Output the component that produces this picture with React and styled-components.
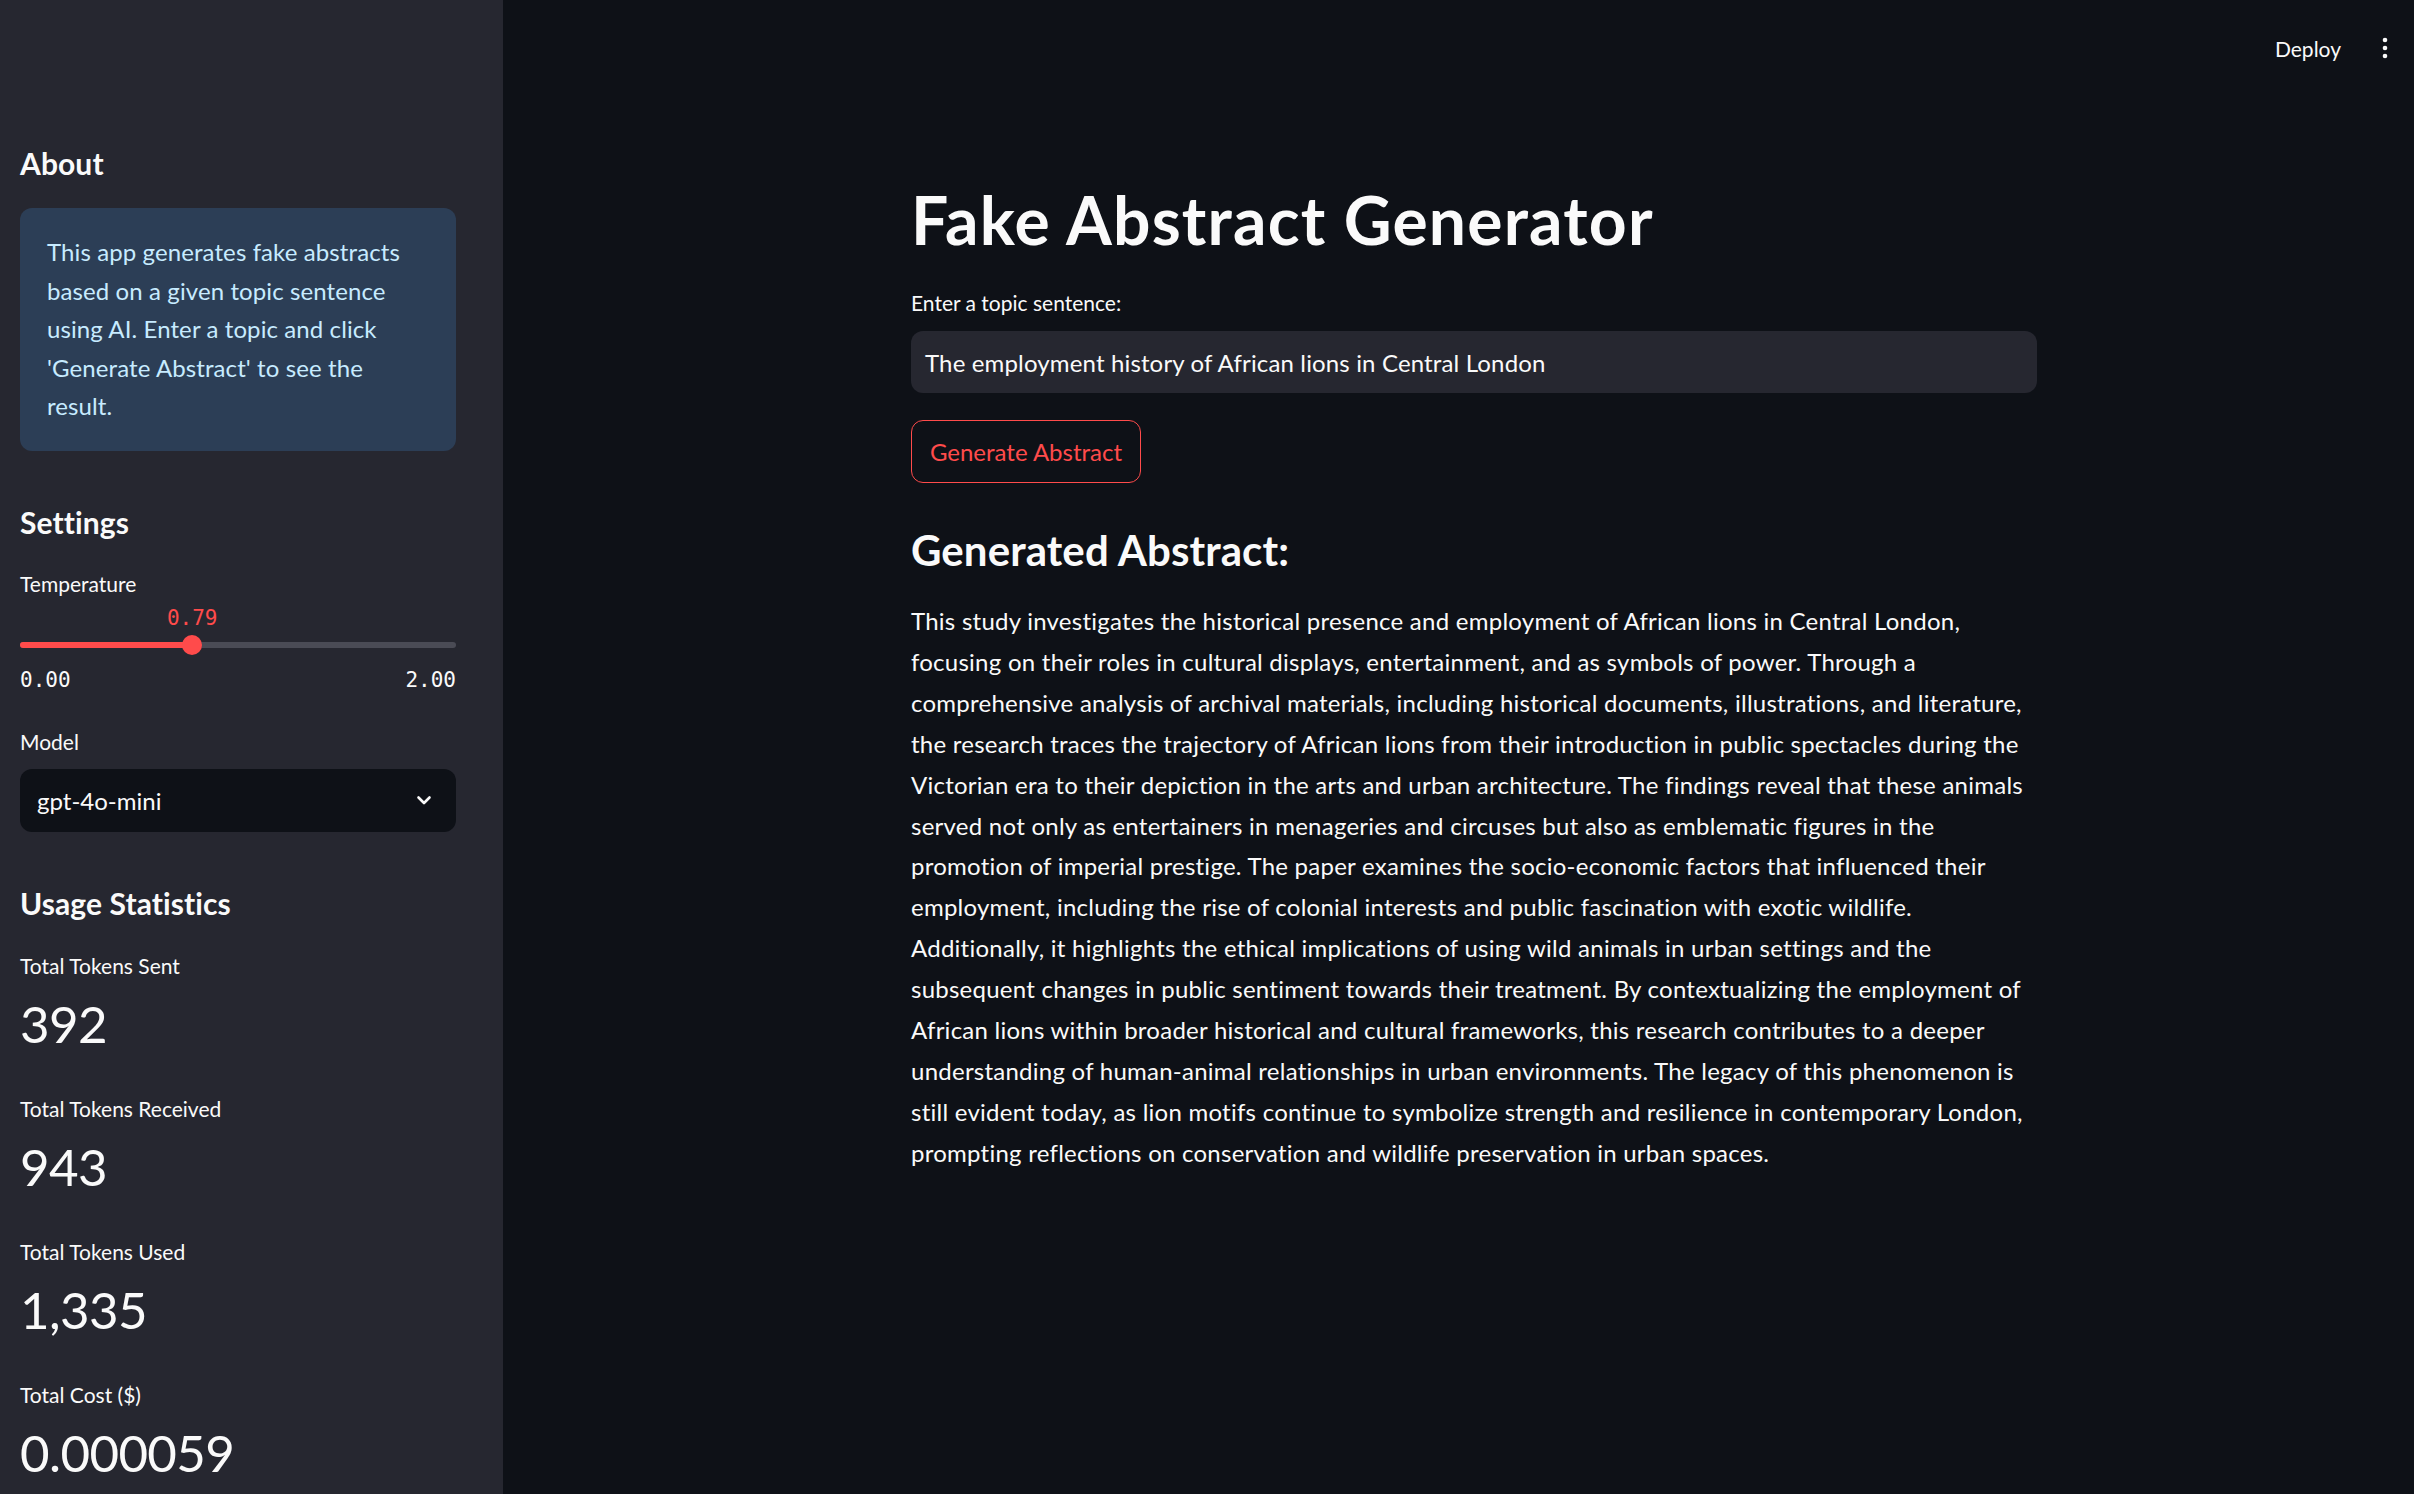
import React from "react";
import styled, { createGlobalStyle } from "styled-components";

const GlobalStyle = createGlobalStyle`
  body {
    margin: 0;
    background: #0e1117;
    color: #fafafa;
    font-family: Lato, "Noto Sans", sans-serif;
  }
`;

const infoLines = [
  "This app generates fake abstracts",
  "based on a given topic sentence",
  "using AI. Enter a topic and click",
  "'Generate Abstract' to see the",
  "result.",
];

const abstractLines = [
  "This study investigates the historical presence and employment of African lions in Central London,",
  "focusing on their roles in cultural displays, entertainment, and as symbols of power. Through a",
  "comprehensive analysis of archival materials, including historical documents, illustrations, and literature,",
  "the research traces the trajectory of African lions from their introduction in public spectacles during the",
  "Victorian era to their depiction in the arts and urban architecture. The findings reveal that these animals",
  "served not only as entertainers in menageries and circuses but also as emblematic figures in the",
  "promotion of imperial prestige. The paper examines the socio-economic factors that influenced their",
  "employment, including the rise of colonial interests and public fascination with exotic wildlife.",
  "Additionally, it highlights the ethical implications of using wild animals in urban settings and the",
  "subsequent changes in public sentiment towards their treatment. By contextualizing the employment of",
  "African lions within broader historical and cultural frameworks, this research contributes to a deeper",
  "understanding of human-animal relationships in urban environments. The legacy of this phenomenon is",
  "still evident today, as lion motifs continue to symbolize strength and resilience in contemporary London,",
  "prompting reflections on conservation and wildlife preservation in urban spaces.",
];

const metrics = [
  { label: "Total Tokens Sent", value: "392" },
  { label: "Total Tokens Received", value: "943" },
  { label: "Total Tokens Used", value: "1,335" },
  { label: "Total Cost ($)", value: "0.000059" },
];

const temperature = 0.79;
const tempMax = 2;

const App = () => {
  const pct = (temperature / tempMax) * 100;
  return (
    <>
      <GlobalStyle />
      <Page>
        <Sidebar>
          <SideHeading>About</SideHeading>
          <InfoBox>
            {infoLines.map((l) => (
              <Line key={l}>{l}</Line>
            ))}
          </InfoBox>

          <SideHeading $mt={53}>Settings</SideHeading>
          <FieldLabel $mt={27}>Temperature</FieldLabel>
          <Slider>
            <SliderValue style={{ left: `${pct}%` }}>{temperature.toFixed(2)}</SliderValue>
            <Track>
              <TrackFill style={{ width: `${pct}%` }} />
              <Thumb style={{ left: `${pct}%` }} />
            </Track>
            <Ticks>
              <span>0.00</span>
              <span>2.00</span>
            </Ticks>
          </Slider>

          <FieldLabel $mt={29}>Model</FieldLabel>
          <Select>
            <span>gpt-4o-mini</span>
            <svg width="24" height="24" viewBox="0 0 24 24" fill="none">
              <path d="M6.5 9.5l5.5 5.5 5.5-5.5" stroke="#fafafa" strokeWidth="2.6" strokeLinecap="round" strokeLinejoin="round" />
            </svg>
          </Select>

          <SideHeading $mt={53}>Usage Statistics</SideHeading>
          <Metrics>
            {metrics.map((m) => (
              <Metric key={m.label}>
                <MetricLabel>{m.label}</MetricLabel>
                <MetricValue>{m.value}</MetricValue>
              </Metric>
            ))}
          </Metrics>
        </Sidebar>

        <Main>
          <TopBar>
            <DeployButton>Deploy</DeployButton>
            <Kebab>
              <svg width="8" height="24" viewBox="0 0 8 24">
                <circle cx="4" cy="4" r="2.3" fill="#fafafa" />
                <circle cx="4" cy="12" r="2.3" fill="#fafafa" />
                <circle cx="4" cy="20" r="2.3" fill="#fafafa" />
              </svg>
            </Kebab>
          </TopBar>
          <Content>
            <Title>Fake Abstract Generator</Title>
            <InputLabel>Enter a topic sentence:</InputLabel>
            <TextInput>The employment history of African lions in Central London</TextInput>
            <Button>Generate Abstract</Button>
            <SubTitle>Generated Abstract:</SubTitle>
            <Paragraph>
              {abstractLines.map((l) => (
                <Line key={l}>{l}</Line>
              ))}
            </Paragraph>
          </Content>
        </Main>
      </Page>
    </>
  );
};

export default App;

const Page = styled.div`
  display: flex;
  min-height: 100vh;
`;

const Sidebar = styled.aside`
  width: 503px;
  flex-shrink: 0;
  box-sizing: border-box;
  background: #262730;
  padding: 145px 47px 0 20px;
  display: flex;
  flex-direction: column;
  overflow: hidden;
  height: 1494px;
`;

const SideHeading = styled.h2`
  margin: ${(p) => p.$mt || 0}px 0 0;
  font-size: 30px;
  line-height: 36px;
  font-weight: 700;
  color: #fafafa;
  letter-spacing: 0.1px;
`;

const InfoBox = styled.div`
  margin-top: 27px;
  background: #2c3e56;
  border-radius: 12px;
  padding: 25px 24px 25px 27px;
  color: #c7ebff;
  font-size: 24px;
  line-height: 38.5px;
  letter-spacing: 0.1px;
`;

const Line = styled.span`
  display: block;
  white-space: nowrap;
`;

const FieldLabel = styled.div`
  margin-top: ${(p) => p.$mt || 0}px;
  font-size: 21px;
  line-height: 34px;
  color: #fafafa;
`;

const Slider = styled.div`
  position: relative;
  padding-top: 34px;
`;

const SliderValue = styled.div`
  position: absolute;
  top: 0;
  transform: translateX(-50%);
  font-family: "DejaVu Sans Mono", "Liberation Mono", monospace;
  font-size: 21px;
  line-height: 34px;
  color: #ff4b4b;
`;

const Track = styled.div`
  position: relative;
  height: 6px;
  border-radius: 3px;
  background: #4a4b55;
  margin: 7px 0;
`;

const TrackFill = styled.div`
  height: 100%;
  border-radius: 3px;
  background: #ff4b4b;
`;

const Thumb = styled.div`
  position: absolute;
  top: 50%;
  width: 20px;
  height: 20px;
  border-radius: 50%;
  background: #ff4b4b;
  transform: translate(-50%, -50%);
`;

const Ticks = styled.div`
  display: flex;
  justify-content: space-between;
  margin-top: 16px;
  font-family: "DejaVu Sans Mono", "Liberation Mono", monospace;
  font-size: 21px;
  line-height: 32px;
  color: #fafafa;
`;

const Select = styled.div`
  margin-top: 10px;
  height: 63px;
  box-sizing: border-box;
  background: #0e1117;
  border-radius: 12px;
  display: flex;
  align-items: center;
  justify-content: space-between;
  padding: 0 20px 0 17px;
  font-size: 24px;
  color: #fafafa;
`;

const Metrics = styled.div`
  margin-top: 28px;
  display: flex;
  flex-direction: column;
  gap: 36px;
`;

const Metric = styled.div`
  display: flex;
  flex-direction: column;
  gap: 8px;
`;

const MetricLabel = styled.div`
  font-size: 21px;
  line-height: 34px;
  color: #fafafa;
`;

const MetricValue = styled.div`
  font-size: 51px;
  line-height: 65px;
  letter-spacing: -0.6px;
  color: #fafafa;
`;

const Main = styled.main`
  flex: 1;
  display: flex;
  flex-direction: column;
`;

const TopBar = styled.header`
  height: 96px;
  display: flex;
  align-items: center;
  justify-content: flex-end;
  gap: 40px;
  padding-right: 25px;
`;

const DeployButton = styled.span`
  font-size: 21px;
  color: #fafafa;
`;

const Kebab = styled.span`
  display: flex;
  align-items: center;
`;

const Content = styled.div`
  width: 1126px;
  margin-left: 408px;
  padding-top: 84px;
  display: flex;
  flex-direction: column;
  align-items: flex-start;
`;

const Title = styled.h1`
  margin: 0;
  font-size: 66px;
  line-height: 79px;
  font-weight: 700;
  letter-spacing: 1.2px;
  color: #fafafa;
`;

const InputLabel = styled.div`
  margin-top: 27px;
  font-size: 21px;
  line-height: 34px;
  color: #fafafa;
`;

const TextInput = styled.div`
  margin-top: 11px;
  align-self: stretch;
  height: 62px;
  box-sizing: border-box;
  background: #262730;
  border-radius: 12px;
  display: flex;
  align-items: center;
  padding: 0 14px;
  font-size: 24px;
  letter-spacing: 0.15px;
  color: #fafafa;
`;

const Button = styled.button`
  margin-top: 27px;
  height: 63px;
  width: 230px;
  box-sizing: border-box;
  background: #0e1117;
  border: 1.5px solid #ff4b4b;
  border-radius: 12px;
  color: #ff4b4b;
  font-family: inherit;
  font-size: 24px;
  padding: 0;
`;

const SubTitle = styled.h3`
  margin: 42px 0 0;
  font-size: 42px;
  line-height: 50px;
  font-weight: 700;
  letter-spacing: 0.1px;
  color: #fafafa;
`;

const Paragraph = styled.p`
  margin: 26px 0 0;
  font-size: 24px;
  line-height: 40.9px;
  letter-spacing: 0.25px;
  color: #fafafa;
`;
